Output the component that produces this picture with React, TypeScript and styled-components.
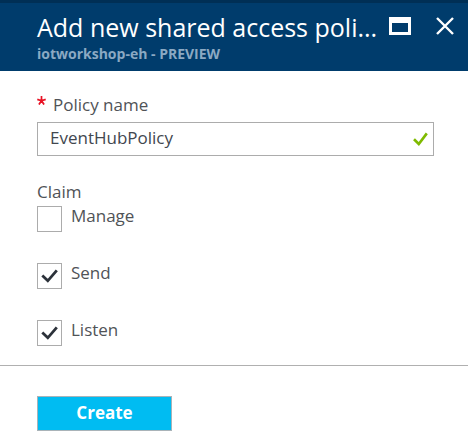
import React, { useState } from "react";
import styled, { createGlobalStyle } from "styled-components";

const GlobalStyle = createGlobalStyle`
  *, *::before, *::after { box-sizing: border-box; }
  body {
    margin: 0;
    background: #ffffff;
    color: #505357;
    font-family: "Open Sans", "Noto Sans", sans-serif;
    font-size: 17px;
    line-height: 24px;
  }
`;

const Blade = styled.main`
  display: flex;
  flex-direction: column;
`;

const Header = styled.header`
  display: flex;
  align-items: flex-start;
  justify-content: space-between;
  padding: 7px 13px 7px 37px;
  border-top: 3px solid #002f55;
  background: #003c6c;
`;

const Heading = styled.div`
  flex: 1;
  min-width: 0;
`;

const Title = styled.h1`
  margin: 0;
  color: #ffffff;
  font-size: 25px;
  font-weight: 400;
  line-height: 34px;
  white-space: nowrap;
`;

const Subtitle = styled.p`
  margin: 0;
  color: #8ba9c3;
  font-size: 14px;
  font-weight: 700;
  line-height: 20px;
`;

const WindowActions = styled.div`
  display: flex;
  gap: 24px;
  padding-top: 6px;
`;

const IconButton = styled.button`
  display: flex;
  padding: 0;
  border: 0;
  background: transparent;
  color: #ffffff;
  cursor: pointer;
`;

const Form = styled.form`
  display: flex;
  flex-direction: column;
`;

const Fields = styled.div`
  display: flex;
  flex-direction: column;
  gap: 24px;
  padding: 22px 34px 19px 37px;
  border-bottom: 1px solid #b0b0b0;
`;

const Field = styled.div`
  display: flex;
  flex-direction: column;
  gap: 5px;
`;

const FieldLabel = styled.label`
  display: flex;
  gap: 7px;
`;

const Required = styled.span`
  display: flex;
  padding-top: 3px;
  color: #e81123;
`;

const InputFrame = styled.div`
  display: flex;
  align-items: center;
  height: 34px;
  padding-right: 5px;
  border: 1px solid #acacac;
  color: #7fba00;
`;

const TextInput = styled.input`
  flex: 1;
  min-width: 0;
  height: 32px;
  padding: 0 12px 3px;
  border: 0;
  outline: 0;
  background: transparent;
  color: #42474f;
  font: inherit;
`;

const ClaimGroup = styled.fieldset`
  display: flex;
  flex-direction: column;
  margin: 0;
  padding: 0;
  border: 0;
`;

const Legend = styled.legend`
  padding: 0 0 2px;
  line-height: 24px;
`;

const Options = styled.div`
  display: flex;
  flex-direction: column;
  gap: 31px;
`;

const Option = styled.label`
  display: flex;
  align-items: flex-start;
  gap: 9px;
  height: 26px;
  line-height: 20px;
`;

const CheckFrame = styled.span`
  display: grid;
  width: 25px;
  height: 26px;
  color: #2c323a;

  > * { grid-area: 1 / 1; }
`;

const CheckInput = styled.input`
  appearance: none;
  width: 25px;
  height: 26px;
  margin: 0;
  border: 1px solid #acacac;
  background: #ffffff;
`;

const CheckMark = styled.svg`
  place-self: center;
  pointer-events: none;
`;

const Footer = styled.footer`
  padding: 30px 37px 10px;
`;

const CreateButton = styled.button`
  width: 135px;
  height: 35px;
  padding: 0 0 2px;
  border: 1px solid #a9b3b8;
  background: #00bcf2;
  color: #ffffff;
  font: inherit;
  font-weight: 700;
  cursor: pointer;
`;

const claims = [
  { name: "Manage", initial: false },
  { name: "Send", initial: true },
  { name: "Listen", initial: true },
];

function ClaimOption({ name, initial }: { name: string; initial: boolean }) {
  const [checked, setChecked] = useState(initial);
  return (
    <Option>
      <CheckFrame>
        <CheckInput
          type="checkbox"
          name={name}
          checked={checked}
          onChange={(event) => setChecked(event.target.checked)}
        />
        {checked && (
          <CheckMark width="17" height="14" viewBox="0 0 17 14" aria-hidden="true">
            <path d="M1.3 6.6 L6.8 11.8 L15.8 1.4" fill="none" stroke="currentColor" strokeWidth="2.8" />
          </CheckMark>
        )}
      </CheckFrame>
      <span>{name}</span>
    </Option>
  );
}

export default function App() {
  const [policy, setPolicy] = useState("EventHubPolicy");
  return (
    <Blade>
      <GlobalStyle />
      <Header>
        <Heading>
          <Title>Add new shared access poli...</Title>
          <Subtitle>iotworkshop-eh - PREVIEW</Subtitle>
        </Heading>
        <WindowActions>
          <IconButton type="button" aria-label="Maximize">
            <svg width="22" height="20" viewBox="0 0 22 20">
              <path d="M0 1H22V19H0Z M3 7V16H19V7Z" fill="currentColor" fillRule="evenodd" />
            </svg>
          </IconButton>
          <IconButton type="button" aria-label="Close">
            <svg width="20" height="20" viewBox="0 0 20 20">
              <path d="M2 2L18 18M18 2L2 18" stroke="currentColor" strokeWidth="2.4" />
            </svg>
          </IconButton>
        </WindowActions>
      </Header>
      <Form onSubmit={(event) => event.preventDefault()}>
        <Fields>
          <Field>
            <FieldLabel htmlFor="policy-name">
              <Required aria-hidden="true">
                <svg width="9" height="9" viewBox="0 0 9 9">
                  <path
                    d="M4.5 4.8V0M4.5 4.8L0.3 3.4M4.5 4.8L8.7 3.4M4.5 4.8L1.9 8.6M4.5 4.8L7.1 8.6"
                    stroke="currentColor"
                    strokeWidth="1.7"
                  />
                </svg>
              </Required>
              Policy name
            </FieldLabel>
            <InputFrame>
              <TextInput
                id="policy-name"
                required
                value={policy}
                onChange={(event) => setPolicy(event.target.value)}
              />
              <svg width="15" height="14" viewBox="0 0 15 14" aria-hidden="true">
                <path d="M1 7.3L5.8 12L13.8 1.4" fill="none" stroke="currentColor" strokeWidth="2.6" />
              </svg>
            </InputFrame>
          </Field>
          <ClaimGroup>
            <Legend>Claim</Legend>
            <Options>
              {claims.map((claim) => (
                <ClaimOption key={claim.name} {...claim} />
              ))}
            </Options>
          </ClaimGroup>
        </Fields>
        <Footer>
          <CreateButton type="submit">Create</CreateButton>
        </Footer>
      </Form>
    </Blade>
  );
}
